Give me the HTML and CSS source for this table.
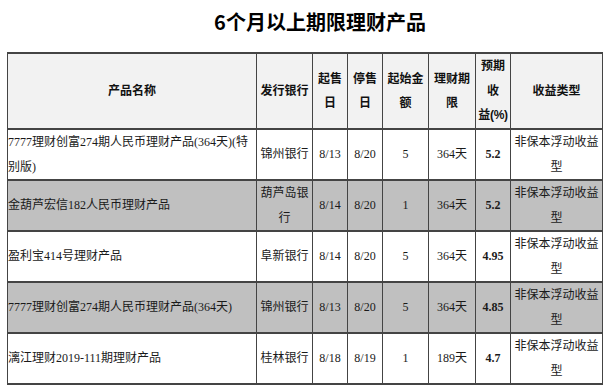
FILE: index.html
```html
<!DOCTYPE html>
<html lang="zh-CN">
<head>
    <meta charset="UTF-8">
    <meta name="viewport" content="width=device-width, initial-scale=1.0">
    <title>6个月以上期限理财产品</title>
    <link rel="stylesheet" href="styles.css">
</head>
<body>
    <!-- Title -->
    <h2 class="title">6个月以上期限理财产品</h2>

    <!-- Product Table -->
    <div class="wrap">
        <table class="products">
            <colgroup>
                <col class="c-name">
                <col class="c-bank">
                <col class="c-date">
                <col class="c-date">
                <col class="c-min">
                <col class="c-term">
                <col class="c-rate">
                <col class="c-type">
            </colgroup>
            <thead>
                <tr>
                    <th>产品名称</th>
                    <th>发行银行</th>
                    <th>起售<br>日</th>
                    <th>停售<br>日</th>
                    <th>起始金<br>额</th>
                    <th>理财期<br>限</th>
                    <th>预期<br>收<br><span class="nowrap">益(%)</span></th>
                    <th>收益类型</th>
                </tr>
            </thead>
            <tbody>
                <tr>
                    <td class="name">7777理财创富274期人民币理财产品(364天)(特别版)</td>
                    <td>锦州银行</td>
                    <td>8/13</td>
                    <td>8/20</td>
                    <td>5</td>
                    <td>364天</td>
                    <td class="rate">5.2</td>
                    <td>非保本浮动收益型</td>
                </tr>
                <tr class="shade">
                    <td class="name">金葫芦宏信182人民币理财产品</td>
                    <td>葫芦岛银行</td>
                    <td>8/14</td>
                    <td>8/20</td>
                    <td>1</td>
                    <td>364天</td>
                    <td class="rate">5.2</td>
                    <td>非保本浮动收益型</td>
                </tr>
                <tr>
                    <td class="name">盈利宝414号理财产品</td>
                    <td>阜新银行</td>
                    <td>8/14</td>
                    <td>8/20</td>
                    <td>5</td>
                    <td>364天</td>
                    <td class="rate">4.95</td>
                    <td>非保本浮动收益型</td>
                </tr>
                <tr class="shade">
                    <td class="name">7777理财创富274期人民币理财产品(364天)</td>
                    <td>锦州银行</td>
                    <td>8/13</td>
                    <td>8/20</td>
                    <td>5</td>
                    <td>364天</td>
                    <td class="rate">4.85</td>
                    <td>非保本浮动收益型</td>
                </tr>
                <tr>
                    <td class="name">漓江理财2019-111期理财产品</td>
                    <td>桂林银行</td>
                    <td>8/18</td>
                    <td>8/19</td>
                    <td>1</td>
                    <td>189天</td>
                    <td class="rate">4.7</td>
                    <td>非保本浮动收益型</td>
                </tr>
            </tbody>
        </table>
    </div>
</body>
</html>
```

FILE: styles.css
```css
/* General Styles */
body {
    margin: 0;
    background-color: #fff;
    color: #1a1a1a;
    font-family: "Liberation Serif", "Noto Sans CJK SC", serif;
}

.title {
    margin: 10px 0 18px;
    padding-left: 31px;
    text-align: center;
    font-family: "Noto Sans CJK SC", "Liberation Sans", sans-serif;
    font-size: 20px;
    line-height: 24px;
    font-weight: bold;
    color: #000;
}

.wrap {
    padding: 0 7px;
}

/* Table */
.products {
    width: 596px;
    table-layout: fixed;
    border-collapse: collapse;
    border-top: 2px solid #444;
    border-bottom: 2px solid #444;
    border-left: 1px solid #444;
    border-right: 1px solid #444;
    font-size: 12px;
    line-height: 24.5px;
}
.c-name { width: 249px; }
.c-bank { width: 56px; }
.c-date { width: 35px; }
.c-min  { width: 46px; }
.c-term { width: 47px; }
.c-rate { width: 35px; }
.c-type { width: 92px; }

.products th,
.products td {
    padding: 0 1px;
    border-top: 2px solid #444;
    border-bottom: 2px solid #444;
    border-left: 1px solid #444;
    border-right: 1px solid #444;
    text-align: center;
    vertical-align: middle;
}
.products th {
    height: 74px;
    padding: 0;
    background-color: #f2f2f2;
    font-family: "Liberation Sans", "Noto Sans CJK SC", sans-serif;
    font-weight: bold;
    color: #111;
}
.nowrap {
    white-space: nowrap;
    letter-spacing: -0.3px;
}
.products td {
    height: 49px;
}
.products td.name {
    text-align: left;
    padding-left: 0;
}
.products td.rate {
    font-weight: bold;
}
.products tr.shade td {
    background-color: #c0c0c0;
}
```
